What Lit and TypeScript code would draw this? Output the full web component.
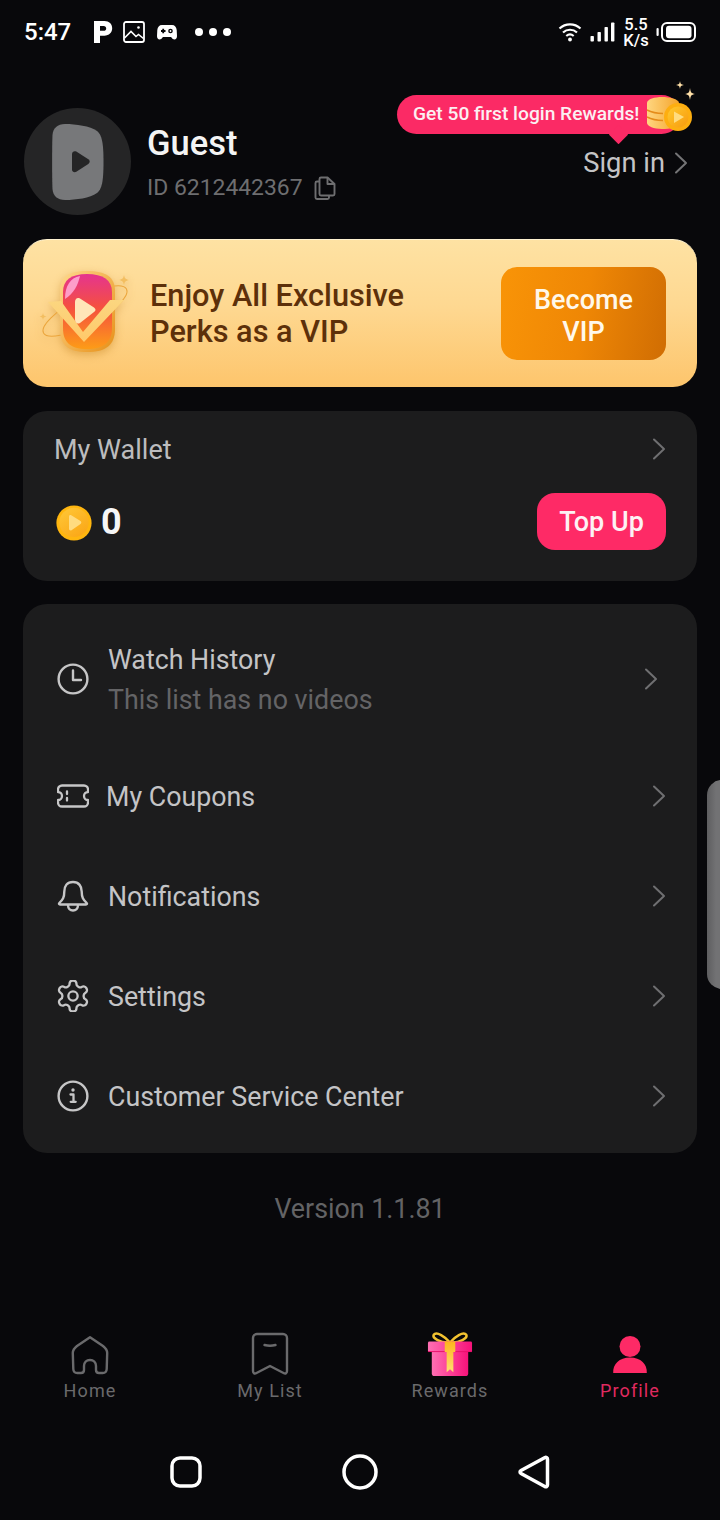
import { LitElement, html, css, svg } from "lit";
import { customElement } from "lit/decorators.js";

const chevron = (cls = "chev") => html`<svg class=${cls} width="14" height="22" viewBox="0 0 14 22" fill="none"><path d="M2 1.5 12 11 2 20.5" stroke="currentColor" stroke-width="2" stroke-linecap="round" stroke-linejoin="round"/></svg>`;

const coin = (id: string, size: number) => html`<svg width=${size} height=${size} viewBox="0 0 36 36">
  <defs><linearGradient id=${id} x1="0" y1="0" x2="0.7" y2="1"><stop offset="0" stop-color="#ffc838"/><stop offset="1" stop-color="#fba818"/></linearGradient></defs>
  <circle cx="18" cy="18" r="17.6" fill="#ffb60f"/>
  <circle cx="18" cy="17.4" r="14.6" fill=${`url(#${id})`}/>
  <path d="M13 11.500c0-1.200 1.200-1.800 2.200-1.200l9.300 5.800c1.100.7 1.100 2.200 0 2.900l-9 6.200c-1 .7-2.500 0-2.500-1.200z" fill="#ffdb80"/>
</svg>`;

const rowIcons: Record<string, unknown> = {
  clock: svg`<circle cx="16" cy="16" r="14.400" stroke-width="2.400"/><path d="M16 7.500V17h8" stroke-width="2.400" stroke-linecap="round" stroke-linejoin="round"/>`,
  coupon: svg`<path d="M5 5.500h22a4 4 0 0 1 4 4v2.500a4 4 0 0 0 0 8v2.500a4 4 0 0 1-4 4H5a4 4 0 0 1-4-4V20a4 4 0 0 0 0-8V9.500a4 4 0 0 1 4-4z" stroke-width="2.300" stroke-linejoin="round"/><path d="M10 11.500v2.500M10 18v2.500" stroke-width="2.300" stroke-linecap="round"/>`,
  bell: svg`<path d="M16 2C10 2 7.300 6.500 7.300 11.500c0 6-1.500 8-5 11.500-.7.700-.2 1.500.7 1.500h26c.900 0 1.400-.8.700-1.500-3.500-3.500-5-5.500-5-11.500C24.700 6.500 22 2 16 2z" stroke-width="2.400" stroke-linejoin="round"/><path d="M11 25c0 3.500 2.200 5.500 5 5.500s5-2 5-5.500" stroke-width="2.400"/>`,
  gear: svg`<g transform="translate(-2.600 -2.600) scale(1.550)"><path d="M12.220 2h-.44a2 2 0 0 0-2 2v.18a2 2 0 0 1-1 1.730l-.43.250a2 2 0 0 1-2 0l-.15-.08a2 2 0 0 0-2.730.730l-.22.380a2 2 0 0 0 .730 2.730l.15.100a2 2 0 0 1 1 1.720v.51a2 2 0 0 1-1 1.740l-.15.090a2 2 0 0 0-.73 2.730l.22.380a2 2 0 0 0 2.730.730l.15-.08a2 2 0 0 1 2 0l.43.250a2 2 0 0 1 1 1.730V20a2 2 0 0 0 2 2h.44a2 2 0 0 0 2-2v-.18a2 2 0 0 1 1-1.730l.43-.25a2 2 0 0 1 2 0l.15.08a2 2 0 0 0 2.730-.73l.22-.39a2 2 0 0 0-.73-2.730l-.15-.08a2 2 0 0 1-1-1.740v-.5a2 2 0 0 1 1-1.740l.15-.09a2 2 0 0 0 .73-2.730l-.22-.38a2 2 0 0 0-2.730-.73l-.15.08a2 2 0 0 1-2 0l-.43-.25a2 2 0 0 1-1-1.730V4a2 2 0 0 0-2-2z" stroke-width="1.500" stroke-linejoin="round"/><circle cx="12" cy="12" r="3" stroke-width="1.500"/></g>`,
  info: svg`<circle cx="16" cy="16" r="14.400" stroke-width="2.400"/><path d="M13.500 14.500h3v7.200M13.700 21.800h5" stroke-width="2.300" stroke-linecap="round" stroke-linejoin="round"/><circle cx="16" cy="10" r="1.700" fill="#c6c6c7" stroke="none"/>`,
};

const rowIcon = (name: string) => html`<svg class="ri" width="32" height="32" viewBox="0 0 32 32" fill="none" stroke="#c6c6c7">${rowIcons[name]}</svg>`;

@customElement("app-root")
export class AppRoot extends LitElement {
  static styles = css`
    :host { display: block; height: 1520px; background: #08080b; font-family: Roboto, "Noto Sans", sans-serif; color: #fff; position: relative; overflow: hidden; }
    .page { height: 1520px; display: flex; flex-direction: column; }

    .status { height: 64px; display: flex; align-items: center; padding: 0 24px 0 24px; flex: none; }
    .time { font-size: 24px; font-weight: 500; width: 69px; }
    .status-left { display: flex; align-items: center; gap: 0; }
    .status-right { margin-left: auto; display: flex; align-items: center; }
    .speed { font-size: 16.500px; font-weight: 500; line-height: 16px; text-align: center; width: 36px; margin: 1px 0 0 3px; }
    .dots { display: flex; gap: 6px; margin-left: 18px; }
    .dots i { width: 8px; height: 8px; border-radius: 50%; background: #fff; display: block; }
    .status svg { display: block; flex: none; }

    .header { flex: none; margin-top: 44px; height: 107px; padding: 0 32px 0 24px; display: flex; align-items: center; position: relative; }
    .avatar { width: 107px; height: 107px; border-radius: 50%; background: #252526; display: flex; align-items: center; justify-content: center; flex: none; }
    .who { margin-left: 16px; display: flex; flex-direction: column; padding-top: 4px; }
    .name { font-size: 34.500px; font-weight: 500; line-height: 38px; margin-top: -1px; color: #f4f4f4; }
    .id { font-size: 22.900px; color: #6e6e70; line-height: 30px; margin-top: 11px; display: flex; align-items: center; gap: 11px; }
    .signin { margin-left: auto; margin-top: 2px; display: flex; align-items: center; gap: 9px; font-size: 27.300px; font-weight: 400; color: #c4c4c6; }
    .signin .chev { color: #747476; }

    .tip { position: absolute; left: 397px; top: -13px; width: 284px; height: 39px; border-radius: 20px; background: #fb2a65; display: flex; align-items: center; padding: 0 0 2px 16px; box-sizing: border-box; font-size: 19.200px; font-weight: 500; color: #fbeff2; }
    .tip::after { content: ""; position: absolute; left: 212px; bottom: -10px; width: 19px; height: 19px; background: #fb2a65; transform: rotate(45deg) scale(.72); border-radius: 1px; }
    .tip-art { position: absolute; left: 645px; top: -28px; }

    .vip { flex: none; margin: 24px 23px 0; height: 148px; border-radius: 24px; background: linear-gradient(180deg, #fee2a3 0%, #fed891 45%, #fdc56c 100%); border-top: 1.500px solid #fff3d2; box-sizing: border-box; display: flex; align-items: center; padding: 0 31px 0 15px; }
    .vip-art { flex: none; margin-right: 18px; margin-top: -4px; filter: drop-shadow(0 3px 4px rgba(190, 120, 20, .4)); }
    .vip-text { font-size: 30.700px; font-weight: 500; line-height: 36px; color: #5d300a; flex: 1; margin-top: 1px; white-space: nowrap; }
    .vip-btn { width: 165px; height: 93px; padding-top: 5px; box-sizing: border-box; border-radius: 16px; background: linear-gradient(100deg, #f99407 0%, #ef8705 50%, #d06d03 100%); display: flex; align-items: center; justify-content: center; text-align: center; font-size: 27px; font-weight: 500; line-height: 32px; color: #fff8ea; margin-top: -1px; flex: none; }

    .card { flex: none; margin: 0 23px; background: #1c1c1d; border-radius: 24px; }
    .wallet { margin-top: 24px; height: 170px; padding: 0 31px; box-sizing: border-box; display: flex; flex-direction: column; }
    .wallet-top { height: 76px; display: flex; align-items: center; justify-content: space-between; font-size: 27px; color: #bcbcbe; }
    .wallet-top span { padding-top: 2px; }
    .chev { color: #6f6f71; flex: none; display: block; }
    .wallet-bottom { display: flex; align-items: center; margin-top: 6px; height: 57px; }
    .coin-wrap { display: flex; margin: 2px 0 0 2px; }
    .balance { font-size: 36px; font-weight: 700; margin-left: 9px; color: #f6f6f6; line-height: 58px; }
    .topup { margin: -1px 0 0 auto; padding-top: 2px; box-sizing: border-box; width: 129px; height: 57px; border-radius: 18px; background: #fe2a66; display: flex; align-items: center; justify-content: center; font-size: 27px; font-weight: 500; color: #fdf1f4; }

    .list { margin-top: 23px; height: 549px; padding: 8px 31px 7px 34px; box-sizing: border-box; display: flex; flex-direction: column; }
    .row { height: 100px; flex: none; display: flex; align-items: center; font-size: 26.800px; color: #c4c4c6; }
    .row.tall { height: 134px; }
    .ri { flex: none; margin-right: 19px; display: block; }
    .row .label { flex: 1; padding-top: 2px; }
    .row .sub { color: #646466; margin-top: 6px; line-height: 34px; display: block; }
    .row .main { line-height: 34px; display: block; }
    .row.tall .chev { margin-right: 8px; }

    .version { flex: none; text-align: center; font-size: 26.800px; color: #636365; margin-top: 38px; line-height: 36px; }

    .tabs { flex: none; margin-top: auto; display: grid; grid-template-columns: repeat(4, 1fr); height: 84px; }
    .tab { display: flex; flex-direction: column; align-items: center; font-size: 18px; letter-spacing: 1.100px; color: #6a6a6c; }
    .tab svg { display: block; height: 46px; flex: none; overflow: visible; }
    .tab span { line-height: 22px; margin-top: 4px; }
    .tab.on { color: #e02a60; }

    .nav { flex: none; height: 106px; display: grid; grid-template-columns: repeat(3, 174px); justify-content: center; align-items: center; justify-items: center; box-sizing: border-box; padding-top: 10px; }
    .nav svg { display: block; }

    .handle { position: absolute; left: 707px; top: 780px; width: 30px; height: 209px; border-radius: 20px; background: linear-gradient(90deg, #5e5e60 0%, #727274 30%); }
  `;

  render() {
    return html`<div class="page">
      <div class="status">
        <div class="status-left">
          <div class="time">5:47</div>
          <svg width="20" height="24" viewBox="0 0 20 24"><path fill-rule="evenodd" d="M1 1h10.500c4.600 0 7.700 3 7.700 7.300 0 4.400-3.200 7.400-7.800 7.400H7V23H1zM7 6v4.800h3.700c1.500 0 2.500-1 2.500-2.400S12.200 6 10.700 6z" fill="#fff"/></svg>
          <svg style="margin-left:10px" width="22" height="22" viewBox="0 0 22 22" fill="none"><rect x="1" y="1" width="20" height="20" rx="2" stroke="#fff" stroke-width="1.800"/><path d="M1.500 17 8 10.500l5 5 2.500-2 5 4" stroke="#fff" stroke-width="1.600"/><circle cx="15.500" cy="6.500" r="1.300" fill="#fff"/></svg>
          <svg style="margin-left:12px" width="20" height="16" viewBox="0 0 20 16"><path fill-rule="evenodd" d="M5 1h10c2.800 0 4.400 2 4.700 5l.3 6c0 2-1 3.500-2.600 3.500-1.200 0-2-.7-2.700-1.700L14 13H6l-.7.800C4.600 14.800 3.800 15.500 2.600 15.500 1 15.500 0 14 0 12l.3-6C.6 3 2.200 1 5 1z" fill="#fff"/><circle cx="13.500" cy="7" r="2.300" fill="#08080b"/><circle cx="13.500" cy="7" r=".9" fill="#fff"/><path d="M4 7h4.500M6.200 4.800v4.400" stroke="#08080b" stroke-width="1.800"/></svg>
          <div class="dots"><i></i><i></i><i></i></div>
        </div>
        <div class="status-right">
          <svg width="24" height="20" viewBox="0 0 24 20" fill="none" stroke="#fff" stroke-width="2.200"><path d="M1.500 6.500c6-5.500 15-5.500 21 0M5 10.500c4-3.700 10-3.700 14 0M8.300 14c2.200-1.800 5.200-1.800 7.400 0"/><circle cx="12" cy="17.500" r="1.900" fill="#fff" stroke="none"/></svg>
          <svg style="margin-left:8px" width="25" height="20" viewBox="0 0 25 20" fill="#fff"><rect x="0.500" y="14" width="3.400" height="5.500" rx=".8"/><rect x="7.500" y="10" width="3.400" height="9.500" rx=".8"/><rect x="14.500" y="5" width="3.400" height="14.500" rx=".8"/><rect x="21" y="0.500" width="3.400" height="19" rx=".8"/></svg>
          <div class="speed">5.5<br />K/s</div>
          <svg style="margin-left:2px" width="40" height="20" viewBox="0 0 40 20" fill="none"><rect x="0.500" y="6" width="2.200" height="8" rx="1" fill="#fff"/><rect x="6" y="1" width="33" height="18" rx="5" stroke="#fff" stroke-width="2"/><rect x="10" y="3.800" width="25.500" height="12.500" rx="3" fill="#fff"/></svg>
        </div>
      </div>

      <div class="header">
        <div class="avatar">
          <svg width="52" height="78" viewBox="0 0 52 78"><path d="M13 1c11 0 25 2 32 7 5 4 6.500 12 6.500 31s-1.500 27-6.500 31c-7 5-21 7-32 7-7.500 0-12-4-12.500-11C0 56 0 22 .500 12 1 5 5.500 1 13 1z" fill="#77787a"/><path d="M20 31c0-2.300 2.300-3.500 4.300-2.400l12 7.600c1.900 1.300 1.900 3.400 0 4.700l-12 7.900c-2 1.100-4.300 0-4.300-2.300z" fill="#252526"/></svg>
        </div>
        <div class="who">
          <div class="name">Guest</div>
          <div class="id">ID 6212442367
            <svg width="22" height="24" viewBox="0 0 22 24" fill="none" stroke="#6e6e70" stroke-width="1.900" stroke-linejoin="round"><path d="M7 1.500h6.500L20.500 8v10a1.500 1.500 0 0 1-1.500 1.500H7A1.500 1.500 0 0 1 5.500 18V3A1.500 1.500 0 0 1 7 1.500z"/><path d="M13.500 1.500V8h7"/><path d="M5.500 5.500H3A1.500 1.500 0 0 0 1.500 7v14.500A1.500 1.500 0 0 0 3 23h10.500a1.500 1.500 0 0 0 1.500-1.500v-2"/></svg>
          </div>
        </div>
        <div class="signin">Sign in ${chevron()}</div>
        <div class="tip">Get 50 first login Rewards!</div>
        <svg class="tip-art" width="54" height="56" viewBox="0 0 54 56">
          <defs>
            <linearGradient id="stack" x1="0" y1="0" x2="1" y2="0"><stop offset="0" stop-color="#ffd680"/><stop offset="1" stop-color="#f4a42c"/></linearGradient>
            <linearGradient id="tc" x1="0" y1="0" x2="1" y2="1"><stop offset="0" stop-color="#ffca2e"/><stop offset="1" stop-color="#f89a0e"/></linearGradient>
          </defs>
          <path d="M2 23c0-4 8-6 15-6s17 2 17 6v21c0 3-9 5-17 5S2 46 2 43z" fill="url(#stack)"/>
          <path d="M2 30c5 2.500 10 3.500 16 3.500M2 37c5 2.500 10 3.500 16 3.500" stroke="#e58c1a" stroke-width="1.400" fill="none"/>
          <circle cx="33" cy="37" r="14" fill="#fdae10"/>
          <circle cx="33" cy="37" r="10.500" fill="url(#tc)"/>
          <path d="M29 31.500l10 5.500-10 6z" fill="#ffdc7f"/>
          <path d="M35 1c.5 3 1 3.500 4 4-3 .500-3.500 1-4 4-.5-3-1-3.500-4-4 3-.500 3.500-1 4-4z" fill="#ffe0a8"/>
          <path d="M45 8c.7 4.500 1.300 5.200 5 6-3.700.8-4.300 1.500-5 6-.7-4.500-1.300-5.200-5-6 3.700-.8 4.300-1.500 5-6z" fill="#ffe0a8"/>
        </svg>
      </div>

      <div class="vip">
        <svg class="vip-art" width="94" height="86" viewBox="0 0 94 86" fill="none">
          <defs>
            <linearGradient id="gem" x1="0" y1="0" x2="0" y2="1"><stop offset="0" stop-color="#e5348f"/><stop offset=".45" stop-color="#f5503f"/><stop offset="1" stop-color="#fd9c17"/></linearGradient>
            <linearGradient id="rim" x1="0" y1="0" x2="1" y2="1"><stop offset="0" stop-color="#ffd88c"/><stop offset="1" stop-color="#e79018"/></linearGradient>
            <linearGradient id="vee" x1="0" y1="0" x2="0" y2="1"><stop offset="0" stop-color="#fbd680"/><stop offset="1" stop-color="#ffc96a"/></linearGradient>
          </defs>
          <ellipse cx="47" cy="42" rx="47" ry="14" transform="rotate(-28 47 42)" stroke="#eba53c" stroke-width="1"/>
          <path d="M22 22C22 8 30 2 49 2s28 6 28 20v38c0 16-9 23-28 23S22 76 22 60z" fill="url(#rim)"/>
          <path d="M25 23c0-12 8-18 24-18s25 6 25 18v36c0 14-8 21-25 21S25 73 25 59z" fill="url(#gem)"/>
          <path d="M27 30c0-13 5-21 15-23-2 9-6 17-15 23z" fill="#ffa9d3" opacity=".9"/>
          <path d="M10 33l13-1 22 31 27-32h14L46 73z" fill="url(#vee)"/>
          <path d="M37 33c0-3 2-5 5-3.500l14 9c2 1.500 2 3 0 4.500L42 54c-3 1.500-5-.5-5-3.500z" fill="#ffe6b8"/>
          <path d="M86 6c.8 3.500 1.500 4.200 5 5-3.500.8-4.200 1.500-5 5-.8-3.500-1.500-4.200-5-5 3.500-.8 4.200-1.500 5-5zM5 44c.5 2.500 1 3 3.500 3.500C6 48 5.500 48.500 5 51c-.5-2.500-1-3-3.500-3.500C4 47 4.500 46.500 5 44z" fill="#f3be60"/>
        </svg>
        <div class="vip-text">Enjoy All Exclusive<br />Perks as a VIP</div>
        <div class="vip-btn">Become<br />VIP</div>
      </div>

      <div class="card wallet">
        <div class="wallet-top"><span>My Wallet</span>${chevron()}</div>
        <div class="wallet-bottom">
          <div class="coin-wrap">${coin("wc", 36)}</div>
          <div class="balance">0</div>
          <div class="topup">Top Up</div>
        </div>
      </div>

      <div class="card list">
        <div class="row tall">${rowIcon("clock")}
          <div class="label"><span class="main">Watch History</span><span class="sub">This list has no videos</span></div>${chevron()}</div>
        <div class="row">${rowIcon("coupon")}<div class="label" style="margin-left:-2px">My Coupons</div>${chevron()}</div>
        <div class="row">${rowIcon("bell")}<div class="label">Notifications</div>${chevron()}</div>
        <div class="row">${rowIcon("gear")}<div class="label">Settings</div>${chevron()}</div>
        <div class="row">${rowIcon("info")}<div class="label">Customer Service Center</div>${chevron()}</div>
      </div>

      <div class="version">Version 1.1.81</div>

      <div class="tabs">
        <div class="tab">
          <svg width="40" height="46" viewBox="0 0 40 46" fill="none" stroke="#6a6a6c" stroke-width="2.400" stroke-linejoin="round"><path d="M20 7.200 33 16c2.500 2 4.200 3.800 4.200 7l-.5 16c-.1 2.500-1.500 4-4 4H29c-2 0-3-1.200-3-3v-4c0-3.500-2.500-6-6-6s-6 2.500-6 6v4c0 1.800-1 3-3 3H7.300c-2.500 0-3.900-1.500-4-4L2.800 23c0-3.200 1.700-5 4.200-7z"/></svg>
          <span>Home</span>
        </div>
        <div class="tab">
          <svg width="40" height="46" viewBox="0 0 40 46" fill="none" stroke="#6a6a6c" stroke-width="2.400" stroke-linejoin="round" stroke-linecap="round"><path d="M7 4h26c2.200 0 4 1.800 4 4v33c0 2-1.600 3-3 2.200l-14-7.200-14 7.200c-1.400.8-3-.2-3-2.200V8c0-2.200 1.800-4 4-4z"/><path d="M14.500 15c3.500 1 7.500 1 11 0"/></svg>
          <span>My List</span>
        </div>
        <div class="tab">
          <svg width="46" height="46" viewBox="0 0 46 48" fill="none">
            <defs>
              <linearGradient id="box" x1="0" y1="0" x2="1" y2="0"><stop offset="0" stop-color="#ff6fb3"/><stop offset="1" stop-color="#f7127a"/></linearGradient>
              <linearGradient id="rib" x1="0" y1="0" x2="0" y2="1"><stop offset="0" stop-color="#fdb41c"/><stop offset="1" stop-color="#ffdf72"/></linearGradient>
            </defs>
            <path d="M23 13C18 7 9 1 6 5c-2 4 8 8 14 8M23 13c5-6 14-12 17-8 2 4-8 8-14 8" stroke="#f2c230" stroke-width="2.600"/>
            <rect x="4" y="17" width="38" height="31" rx="3" fill="url(#box)"/>
            <rect x="0" y="12" width="46" height="11" rx="1.500" fill="url(#box)"/>
            <path d="M0 22.500h46" stroke="#e8106c" stroke-width="1"/>
            <path d="M17.500 12h11v11h-2v21l-3.500-3-3.500 3V23h-2z" fill="url(#rib)"/>
          </svg>
          <span>Rewards</span>
        </div>
        <div class="tab on">
          <svg width="40" height="46" viewBox="0 0 40 46" fill="#fe2a66"><circle cx="20" cy="16.500" r="10.500"/><path d="M3.200 43c-.5-9 6-15.500 16.800-15.500S37.300 34 36.800 43z"/></svg>
          <span>Profile</span>
        </div>
      </div>

      <div class="nav">
        <svg width="34" height="34" viewBox="0 0 34 34" fill="none"><rect x="3" y="3" width="28" height="28" rx="8" stroke="#fff" stroke-width="3.500"/></svg>
        <svg width="38" height="38" viewBox="0 0 38 38" fill="none"><circle cx="19" cy="19" r="16" stroke="#fff" stroke-width="3.500"/></svg>
        <svg width="34" height="36" viewBox="0 0 34 36" fill="none"><path d="M28 3.500c1-.5 2.500 0 2.500 1.500v26c0 1.500-1.500 2.200-2.700 1.500L4 19.500c-1.300-.7-1.300-2.300 0-3z" stroke="#fff" stroke-width="3.500" stroke-linejoin="round"/></svg>
      </div>
    </div>
    <div class="handle"></div>`;
  }
}
